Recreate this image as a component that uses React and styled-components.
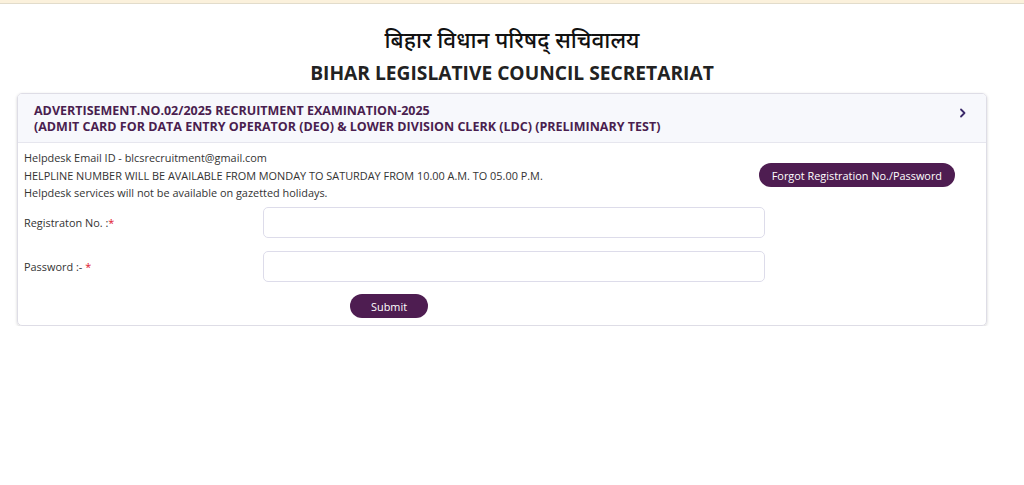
import React from "react";
import styled, { createGlobalStyle } from "styled-components";

const Global = createGlobalStyle`
  html, body { margin: 0; padding: 0; background: #fff; }
  body { font-family: "Open Sans", "Noto Sans", sans-serif; color: #333; }
  * { box-sizing: border-box; }
`;

const TopBar = styled.div`
  height: 4px;
  background: #fbf1dc;
  border-bottom: 1px solid #e2dccb;
`;

const Heading = styled.header`
  display: flex;
  flex-direction: column;
  align-items: center;
  padding-top: 20px;
  padding-bottom: 7px;
`;

const HindiTitle = styled.h1`
  margin: 0 0 5px;
  font-family: "Noto Sans", "Noto Sans Devanagari", sans-serif;
  font-weight: 500;
  font-size: 22.5px;
  line-height: 31px;
  color: #111;
`;

const EnglishTitle = styled.h2`
  margin: 0;
  font-family: "Open Sans", sans-serif;
  font-weight: 700;
  font-size: 19.2px;
  line-height: 26px;
  color: #222;
`;

const Card = styled.section`
  width: 970px;
  margin-left: 17px;
  border: 1px solid #dedde6;
  border-radius: 5px;
  box-shadow: 0 1px 3px rgba(0, 0, 0, 0.18);
  overflow: hidden;
`;

const CardHeader = styled.div`
  display: flex;
  align-items: center;
  justify-content: space-between;
  background: #f7f8fc;
  border-bottom: 1px solid #e6e6ee;
  padding: 9px 18px 7px 16px;
`;

const HeaderText = styled.div`
  font-family: "Open Sans", sans-serif;
  font-weight: 700;
  font-size: 12.5px;
  line-height: 16px;
  color: #4a1e4f;
`;

const Chevron = styled.svg`
  width: 10px;
  height: 10px;
  margin-top: -12px;
`;

const CardBody = styled.div`
  padding: 6px 7px 7px 6px;
`;

const InfoRow = styled.div`
  display: flex;
  align-items: center;
  justify-content: space-between;
`;

const Info = styled.div`
  font-size: 10.9px;
  line-height: 17.5px;
  color: #333;
`;

const PillButton = styled.button`
  font-family: "Open Sans", sans-serif;
  font-size: 10.9px;
  color: #fff;
  background: #4e1d51;
  border: none;
  border-radius: 13px;
  height: 24px;
  padding: 0 ${(p) => p.$px || "16px"};
  cursor: pointer;
`;

const ForgotButton = styled(PillButton)`
  margin-right: 24px;
`;

const FormGrid = styled.div`
  display: grid;
  grid-template-columns: 239px 502px;
  row-gap: 13px;
  align-items: center;
  margin-top: 5px;
`;

const Label = styled.label`
  font-size: 10.9px;
  color: #333;
`;

const Req = styled.span`
  color: #e0132a;
`;

const Input = styled.input`
  height: 31px;
  width: 100%;
  border: 1px solid #dddcea;
  border-radius: 5px;
  background: #fff;
  outline: none;
`;

const SubmitRow = styled.div`
  margin-top: 12px;
  padding-left: 326px;
`;

export default function App() {
  return (
    <>
      <Global />
      <TopBar />
      <Heading>
        <HindiTitle>बिहार विधान परिषद् सचिवालय</HindiTitle>
        <EnglishTitle>BIHAR LEGISLATIVE COUNCIL SECRETARIAT</EnglishTitle>
      </Heading>
      <Card>
        <CardHeader>
          <HeaderText>
            ADVERTISEMENT.NO.02/2025 RECRUITMENT EXAMINATION-2025
            <br />
            (ADMIT CARD FOR DATA ENTRY OPERATOR (DEO) &amp; LOWER DIVISION CLERK (LDC) (PRELIMINARY TEST)
          </HeaderText>
          <Chevron viewBox="0 0 10 10">
            <path d="M3 1.5 L6.5 5 L3 8.5" fill="none" stroke="#3b2a6a" strokeWidth="1.8" strokeLinecap="round" strokeLinejoin="round" />
          </Chevron>
        </CardHeader>
        <CardBody>
          <InfoRow>
            <Info>
              Helpdesk Email ID - blcsrecruitment@gmail.com
              <br />
              HELPLINE NUMBER WILL BE AVAILABLE FROM MONDAY TO SATURDAY FROM 10.00 A.M. TO 05.00 P.M.
              <br />
              Helpdesk services will not be available on gazetted holidays.
            </Info>
            <ForgotButton $px="13px">Forgot Registration No./Password</ForgotButton>
          </InfoRow>
          <FormGrid>
            <Label>
              Registraton No. :<Req>*</Req>
            </Label>
            <Input type="text" />
            <Label>
              Password :- <Req>*</Req>
            </Label>
            <Input type="password" />
          </FormGrid>
          <SubmitRow>
            <PillButton $px="21px">Submit</PillButton>
          </SubmitRow>
        </CardBody>
      </Card>
    </>
  );
}
